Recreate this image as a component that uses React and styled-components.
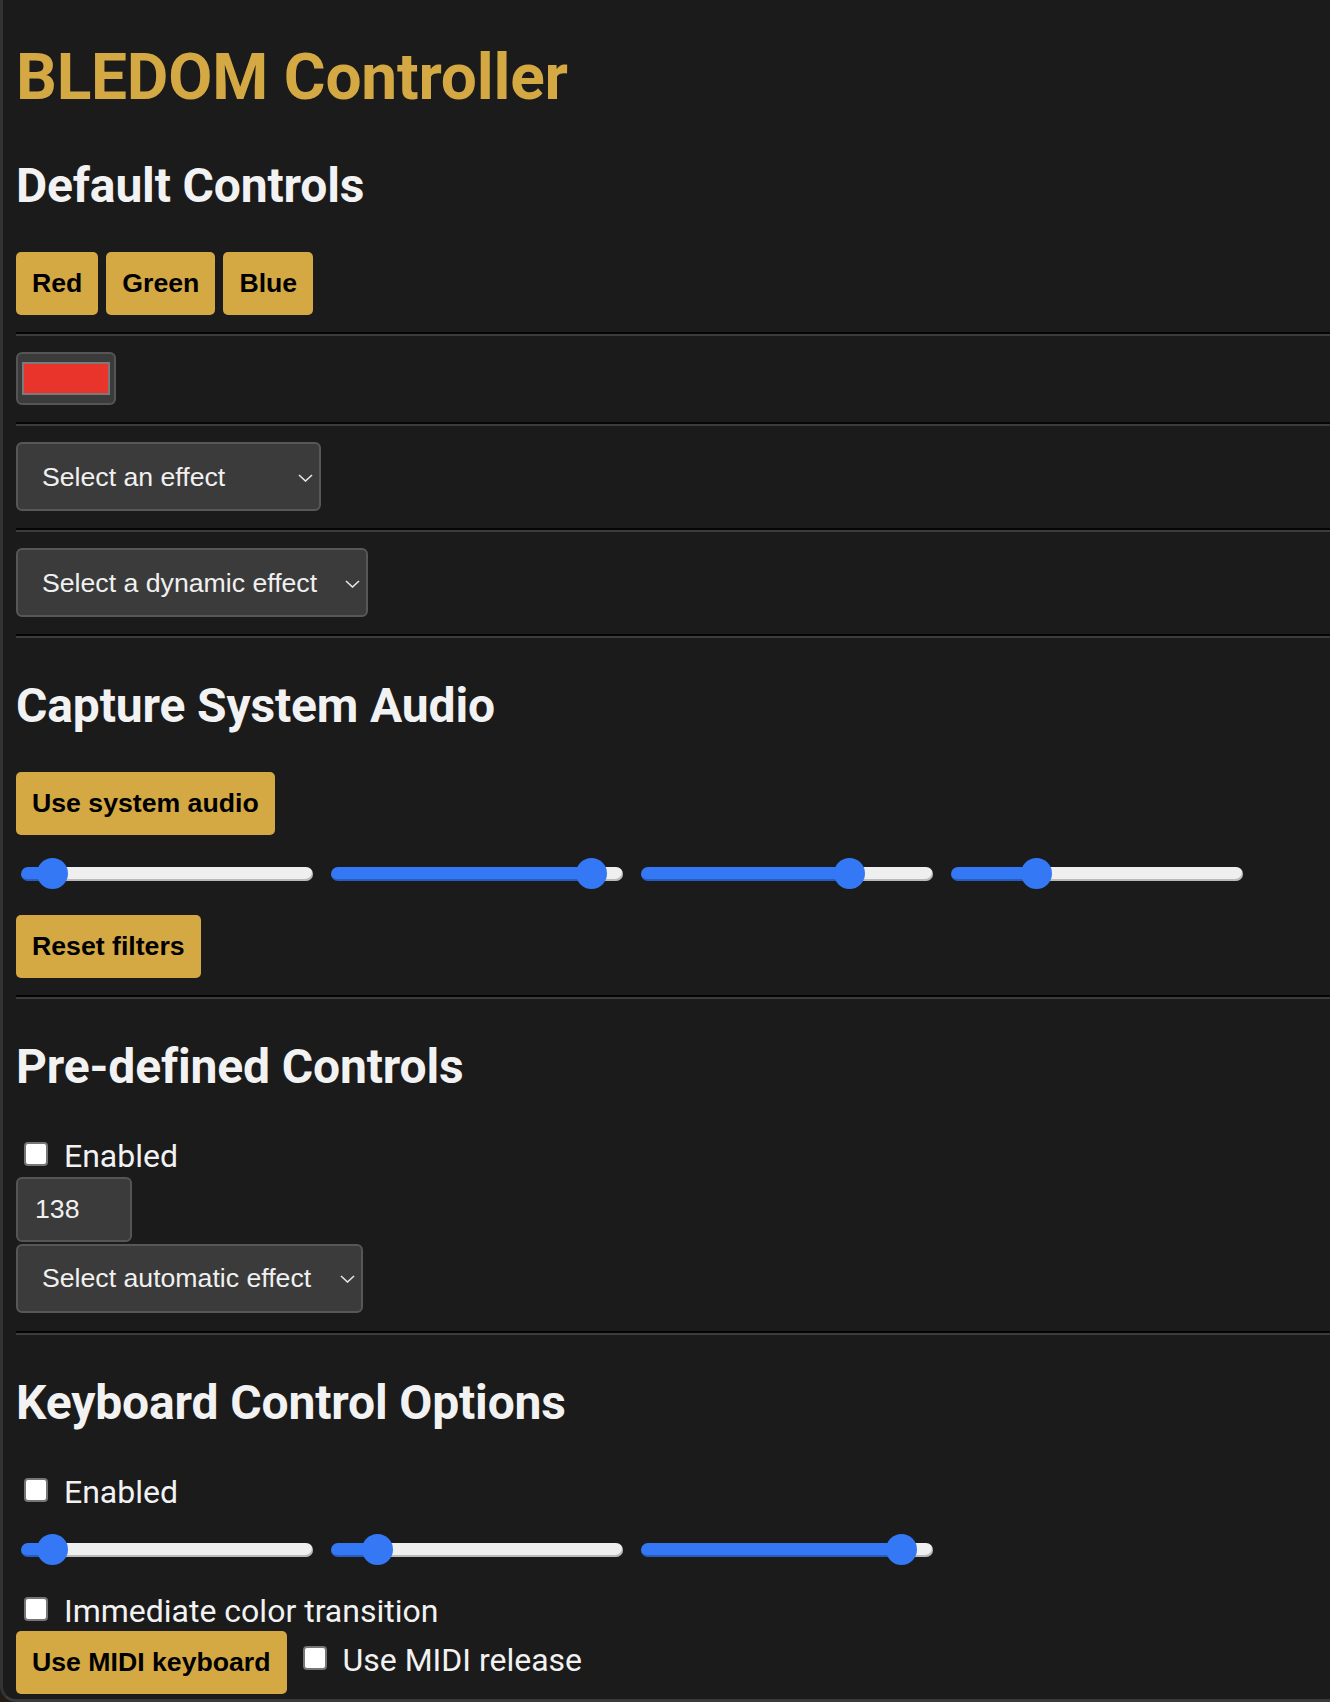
import React from "react";
import styled, { createGlobalStyle } from "styled-components";

const GlobalStyle = createGlobalStyle`
  html, body {
    margin: 0;
    padding: 0;
    background: #231b12;
  }
  * {
    box-sizing: border-box;
  }
`;

const Window = styled.div`
  display: flow-root;
  height: 1702px;
  padding-left: 13px;
  background: #1b1b1b;
  border-left: 3px solid #333;
  border-bottom: 3px solid #3a3a3a;
  border-bottom-left-radius: 16px;
  overflow: hidden;
  font-family: Roboto, "Noto Sans", sans-serif;
  color: #f0f0f0;
`;

const Title = styled.h1`
  margin: 40px 0 0;
  padding-bottom: 2px;
  font-size: 64px;
  line-height: 76px;
  font-weight: 700;
  letter-spacing: -0.2px;
  color: #d4a843;
`;

const SectionTitle = styled.h2`
  margin: 40px 0 38px;
  font-size: 48px;
  line-height: 56px;
  font-weight: 700;
  letter-spacing: -0.15px;
  font-variant-ligatures: common-ligatures;
  color: #f2f2f2;
`;

const Divider = styled.hr`
  height: 0;
  margin: ${(p) => p.$above ?? 17}px 0 16px;
  border: 0;
  border-top: 2px solid #050505;
  border-bottom: 2px solid #3c3c3c;
`;

const ButtonRow = styled.div`
  display: flex;
  gap: 8px;
`;

const Button = styled.button`
  display: block;
  width: fit-content;
  height: 63px;
  padding: 0 16px;
  border: none;
  border-radius: 5px;
  background: #d4a843;
  color: #000;
  font: 700 26.67px/31px "Liberation Sans", Arial, sans-serif;
  cursor: pointer;
`;

const ColorWell = styled.div`
  width: 100px;
  height: 53px;
  padding: 8px 4px;
  background: #3b3b3b;
  border: 2px solid #555;
  border-radius: 6px;
`;

const Swatch = styled.div`
  height: 100%;
  border: 2px solid #7a7a7a;
  background: ${(p) => p.$color};
`;

const SelectWrap = styled.div`
  position: relative;
  width: ${(p) => p.$width}px;
  margin-top: ${(p) => p.$top ?? 0}px;
`;

const Select = styled.select`
  appearance: none;
  -webkit-appearance: none;
  display: block;
  width: 100%;
  height: 69px;
  padding: 0 40px 0 24px;
  background: #3b3b3b;
  color: #f0f0f0;
  border: 2px solid #575757;
  border-radius: 6px;
  font: 26.67px "Liberation Sans", Arial, sans-serif;
`;

const Chevron = styled.svg`
  position: absolute;
  right: 8px;
  top: 50%;
  margin-top: -3px;
  width: 15px;
  height: 8px;
  pointer-events: none;
`;

const NumberField = styled.input`
  display: block;
  width: 116px;
  height: 65px;
  margin-top: 1px;
  padding: 0 0 0 17px;
  background: #3b3b3b;
  color: #f0f0f0;
  border: 2px solid #555;
  border-radius: 6px;
  font: 26.67px "Liberation Sans", Arial, sans-serif;
  -moz-appearance: textfield;
  &::-webkit-inner-spin-button,
  &::-webkit-outer-spin-button {
    -webkit-appearance: none;
    margin: 0;
  }
`;

const CheckLabel = styled.label`
  display: block;
  padding-top: ${(p) => p.$pad ?? 0}px;
  font-size: 32px;
  line-height: 37.5px;
  color: #f2f2f2;
`;

const Check = styled.input`
  appearance: none;
  -webkit-appearance: none;
  width: 24px;
  height: 24px;
  margin: 0 8px;
  vertical-align: 1px;
  background: #fff;
  border: 2px solid #767676;
  border-radius: 4px;
`;

const SliderRow = styled.div`
  display: flex;
  gap: 18px;
  padding-left: 5px;
  margin: 22px 0 ${(p) => p.$after}px;
`;

const Range = styled.input`
  appearance: none;
  -webkit-appearance: none;
  width: 292px;
  height: 33px;
  margin: 0;
  background: transparent;
  &::-webkit-slider-runnable-track {
    height: 14px;
    border-radius: 7px;
    background: linear-gradient(
      to right,
      #3478f6 0,
      #3478f6 var(--fill),
      #efefef var(--fill),
      #efefef 100%
    );
    box-shadow: inset -1px -2px 0 rgba(0, 0, 0, 0.22);
  }
  &::-webkit-slider-thumb {
    -webkit-appearance: none;
    width: 31px;
    height: 31px;
    margin-top: -8.5px;
    border: none;
    border-radius: 50%;
    background: #3478f6;
  }
`;

const MidiRow = styled.div`
  display: flex;
  align-items: baseline;
  gap: 8px;
`;

const Dropdown = ({ width, top, label }) => (
  <SelectWrap $width={width} $top={top}>
    <Select defaultValue="">
      <option value="">{label}</option>
    </Select>
    <Chevron viewBox="0 0 15 8">
      <polyline
        points="1,1 7.5,7 14,1"
        fill="none"
        stroke="#e6e6e6"
        strokeWidth="1.6"
      />
    </Chevron>
  </SelectWrap>
);

// thumb 31px on a 292px track: fill runs to the thumb centre
const Slider = ({ value }) => {
  const fill = ((15.5 + (261 * value) / 100) / 292) * 100;
  return (
    <Range
      type="range"
      min="0"
      max="100"
      defaultValue={value}
      style={{ "--fill": `${fill}%` }}
    />
  );
};

const audioFilters = [6, 94, 74, 26.6];
const keyboardFilters = [6, 12, 93.5];

export default function App() {
  return (
    <>
      <GlobalStyle />
      <Window>
        <Title>BLEDOM Controller</Title>

        <SectionTitle>Default Controls</SectionTitle>
        <ButtonRow>
          {["Red", "Green", "Blue"].map((c) => (
            <Button key={c}>{c}</Button>
          ))}
        </ButtonRow>
        <Divider />
        <ColorWell>
          <Swatch $color="#e8342a" />
        </ColorWell>
        <Divider />
        <Dropdown width={305} label="Select an effect" />
        <Divider />
        <Dropdown width={352} label="Select a dynamic effect" />
        <Divider />

        <SectionTitle>Capture System Audio</SectionTitle>
        <Button>Use system audio</Button>
        <SliderRow $after={25}>
          {audioFilters.map((v, i) => (
            <Slider key={i} value={v} />
          ))}
        </SliderRow>
        <Button>Reset filters</Button>
        <Divider />

        <SectionTitle>Pre-defined Controls</SectionTitle>
        <CheckLabel $pad={5}>
          <Check type="checkbox" /> Enabled
        </CheckLabel>
        <NumberField type="number" defaultValue={138} />
        <Dropdown width={347} top={2} label="Select automatic effect" />
        <Divider $above={18} />

        <SectionTitle>Keyboard Control Options</SectionTitle>
        <CheckLabel $pad={5}>
          <Check type="checkbox" /> Enabled
        </CheckLabel>
        <SliderRow $after={27}>
          {keyboardFilters.map((v, i) => (
            <Slider key={i} value={v} />
          ))}
        </SliderRow>
        <CheckLabel>
          <Check type="checkbox" /> Immediate color transition
        </CheckLabel>
        <MidiRow>
          <Button>Use MIDI keyboard</Button>
          <CheckLabel>
            <Check type="checkbox" /> Use MIDI release
          </CheckLabel>
        </MidiRow>
      </Window>
    </>
  );
}
